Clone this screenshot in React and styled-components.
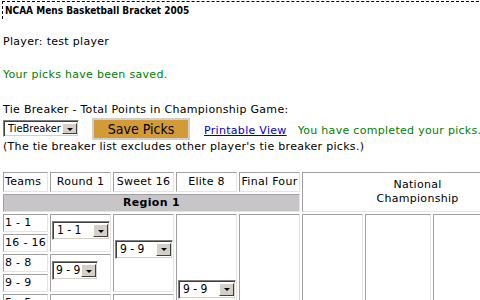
import React from 'react'
import styled, { createGlobalStyle } from 'styled-components'

const Global = createGlobalStyle`
  html, body {
    margin: 0;
    padding: 0;
    background: #fff;
    overflow: hidden;
  }
  body {
    font-family: "DejaVu Sans", Verdana, sans-serif;
    font-size: 11px;
    letter-spacing: 0.3px;
    color: #000;
  }
`

const Page = styled.div`
  padding: 1px 3px 0 3px;
  width: 900px;
`

const Title = styled.div`
  border-top: 1px dashed #000;
  border-left: 1px dashed #000;
  height: 17px;
  line-height: 17px;
  padding-left: 2px;
  margin-left: -1px;
  font-family: "DejaVu Sans Condensed", "DejaVu Sans", sans-serif;
  font-size: 10px;
  font-weight: bold;
  letter-spacing: 0;
`

const Line = styled.div`
  line-height: 14px;
  margin-top: ${p => p.gap}px;
  color: ${p => p.color || '#000'};
  white-space: nowrap;
`

const Controls = styled.div`
  display: flex;
  align-items: center;
  height: 23px;
  white-space: nowrap;
`

const SaveButton = styled.button`
  margin-left: 13px;
  width: 98px;
  height: 22px;
  background: #d29b35;
  border: 2px solid #cfcfcf;
  font-family: "DejaVu Sans Condensed", "DejaVu Sans", sans-serif;
  font-size: 14px;
  color: #000;
  padding: 0;
  line-height: 16px;
`

const PrintLink = styled.a`
  margin-left: 14px;
  color: #0000cc;
  text-decoration: underline;
  margin-top: 3px;
`

const Done = styled.span`
  margin-left: 11px;
  color: #008000;
  margin-top: 3px;
`

const Drop = styled.span`
  display: inline-flex;
  align-items: center;
  box-sizing: border-box;
  width: ${p => p.w}px;
  height: ${p => p.h || 19}px;
  margin-bottom: ${p => p.lift || 0}px;
  background: #fff;
  border: 1px solid;
  border-color: #808080 #fff #fff #808080;
  box-shadow: inset 1px 1px 0 #404040, inset -1px -1px 0 #d4d0c8;
  padding: 2px 1px 2px ${p => p.pad || 4}px;
  font-family: "DejaVu Sans Condensed", "DejaVu Sans", sans-serif;
  font-size: ${p => p.fs || 12}px;
  letter-spacing: 0;
  vertical-align: middle;
`

const DropText = styled.span`
  flex: 1;
  overflow: hidden;
  white-space: nowrap;
  line-height: 13px;
`

const DropArrow = styled.span`
  box-sizing: border-box;
  flex: none;
  width: 15px;
  height: 100%;
  background: #d4d0c8;
  border: 1px solid;
  border-color: #fff #404040 #404040 #fff;
  display: flex;
  align-items: center;
  justify-content: center;
  &::after {
    content: '';
    border-left: 3px solid transparent;
    border-right: 3px solid transparent;
    border-top: 3px solid #000;
    margin-top: 1px;
  }
`

function Select({ value, w, h, fs, lift, pad }) {
  return (
    <Drop w={w} h={h} fs={fs} lift={lift} pad={pad}>
      <DropText>{value}</DropText>
      <DropArrow />
    </Drop>
  )
}

const Bracket = styled.table`
  margin-left: -2px;
  margin-top: 16px;
  border-collapse: separate;
  border-spacing: 2px;
  table-layout: fixed;
  width: 534px;
  font-size: 11px;
`

const Cell = styled.td`
  border: 1px solid;
  border-color: #a0a0a0 #e4e4e4 #e4e4e4 #a0a0a0;
  padding: 0 1px;
  height: ${p => p.h || 16}px;
  text-align: ${p => p.align || 'left'};
  vertical-align: middle;
  background: ${p => (p.shade ? '#c8c5c8' : '#fff')};
  font-weight: ${p => (p.bold ? 'bold' : 'normal')};
  white-space: nowrap;
  line-height: 14px;
`

const HeadCell = styled(Cell)`
  text-align: center;
  white-space: normal;
`

const teams = ['1 - 1', '16 - 16', '8 - 8', '9 - 9', '5 - 5', '12 - 12', '4 - 4', '13 - 13']

export default function App() {
  return (
    <>
      <Global />
      <Page>
        <Title>NCAA Mens Basketball Bracket 2005</Title>
        <Line gap={16}>Player: test player</Line>
        <Line gap={19} color="#008000">Your picks have been saved.</Line>
        <Line gap={21}>Tie Breaker - Total Points in Championship Game:</Line>
        <Controls>
          <Select value="TieBreaker" w={76} h={17} fs={11} />
          <SaveButton>Save Picks</SaveButton>
          <PrintLink href="#">Printable View</PrintLink>
          <Done>You have completed your picks.</Done>
        </Controls>
        <Line gap={0}>(The tie breaker list excludes other player's tie breaker picks.)</Line>

        <Bracket>
          <colgroup>
            <col style={{ width: 45 }} />
            <col style={{ width: 61 }} />
            <col style={{ width: 61 }} />
            <col style={{ width: 61 }} />
            <col style={{ width: 61 }} />
            <col style={{ width: 61 }} />
            <col style={{ width: 66 }} />
            <col style={{ width: 100 }} />
          </colgroup>
          <tbody>
            <tr>
              <Cell h={18}>Teams</Cell>
              <HeadCell>Round 1</HeadCell>
              <HeadCell>Sweet 16</HeadCell>
              <HeadCell>Elite 8</HeadCell>
              <HeadCell>Final Four</HeadCell>
              <HeadCell colSpan={3} rowSpan={2}>National<br />Championship</HeadCell>
            </tr>
            <tr>
              <Cell colSpan={5} shade bold align="center" h={16}>Region 1</Cell>
            </tr>
            <tr>
              <Cell>{teams[0]}</Cell>
              <Cell rowSpan={2}><Select value="1 - 1" w={58} lift={5} /></Cell>
              <Cell rowSpan={4}><Select value="9 - 9" w={58} lift={8} /></Cell>
              <Cell rowSpan={8}><Select value="9 - 9" w={58} lift={8} /></Cell>
              <Cell rowSpan={16} />
              <Cell rowSpan={16} />
              <Cell rowSpan={16} />
              <Cell rowSpan={16} />
            </tr>
            <tr><Cell>{teams[1]}</Cell></tr>
            <tr>
              <Cell>{teams[2]}</Cell>
              <Cell rowSpan={2}><Select value="9 - 9" w={46} lift={5} pad={3} /></Cell>
            </tr>
            <tr><Cell>{teams[3]}</Cell></tr>
            <tr>
              <Cell>{teams[4]}</Cell>
              <Cell rowSpan={2}><Select value="5 - 5" w={58} lift={5} /></Cell>
              <Cell rowSpan={4}><Select value="4 - 4" w={58} lift={8} /></Cell>
            </tr>
            <tr><Cell>{teams[5]}</Cell></tr>
            <tr>
              <Cell>{teams[6]}</Cell>
              <Cell rowSpan={2}><Select value="4 - 4" w={58} lift={5} /></Cell>
            </tr>
            <tr><Cell>{teams[7]}</Cell></tr>
          </tbody>
        </Bracket>
      </Page>
    </>
  )
}
